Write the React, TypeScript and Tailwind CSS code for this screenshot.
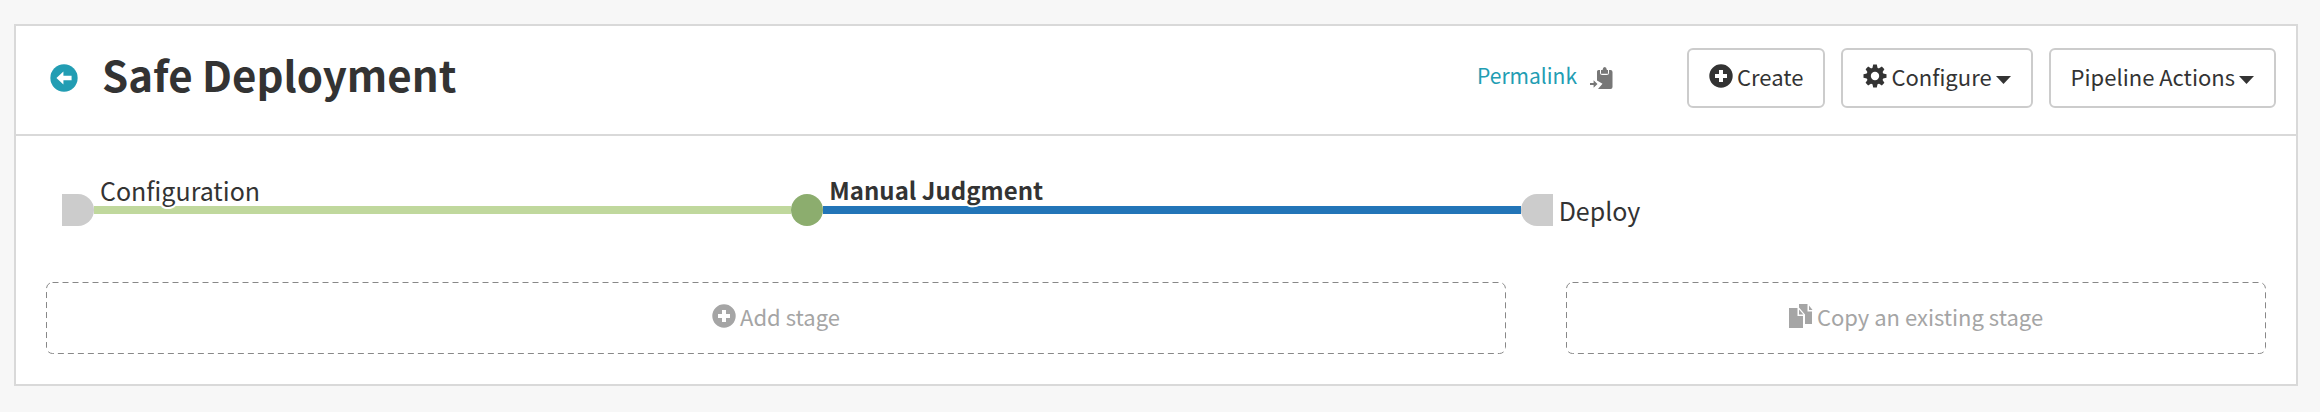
import type { ReactNode } from "react";

function Icon({ size, children }: { size: number; children: ReactNode }) {
  return (
    <svg
      width={size}
      height={size}
      viewBox="0 0 24 24"
      fill="currentColor"
      aria-hidden="true"
      className="shrink-0"
    >
      {children}
    </svg>
  );
}

function PlusIcon() {
  return (
    <Icon size={24}>
      <path fillRule="evenodd" d="M12 0.3a11.7 11.7 0 1 0 0 23.4a11.7 11.7 0 0 0 0-23.4zM10 6h4v4h4v4h-4v4h-4v-4H6v-4h4z" />
    </Icon>
  );
}

function GearIcon() {
  return (
    <Icon size={24}>
      {[0, 45, 90, 135].map((angle) => (
        <path key={angle} d="M10.2 0.5h3.6l1 4.5v14l-1 4.5h-3.6l-1-4.5V5z" transform={`rotate(${angle} 12 12)`} />
      ))}
      <circle cx="12" cy="12" r="8.6" />
      <circle cx="12" cy="12" r="4.2" fill="#fff" />
    </Icon>
  );
}

function ClipboardIcon() {
  return (
    <Icon size={24}>
      <path d="M9.5 4H11v2.5q0 2.5 2.5 2.5h4q2.5 0 2.5-2.5V4h1.5q2 0 2 2v15q0 2-2 2H9l4.5-5.3L8 14.5v-9Q8 4 9.5 4z" />
      <path d="M12 7.7V4h1.5q.4-3 2.2-3t2.2 3H19v3.7z" />
      <path d="M1 17h3.6v-2.7L8.5 18l-3.9 3.7V19H1z" />
    </Icon>
  );
}

function CopyIcon() {
  return (
    <Icon size={24}>
      <path d="M0 4h8.5v8H14v12H0z" />
      <path d="M10 5.5l4.5 5H10z" />
      <path d="M10 0h8.5v7.5H23V20h-7v-9.5l-6-7z" />
      <path d="M20 1.5L23.5 6H20z" />
    </Icon>
  );
}

function Caret() {
  return (
    <svg width="15" height="8" viewBox="0 0 15 8" fill="currentColor" aria-hidden="true" className="mt-2">
      <path d="M0 0h15L7.5 8z" />
    </svg>
  );
}

const buttonClass =
  "flex h-[60px] items-center gap-1 rounded-md border-2 border-[#ccc] bg-white px-5 pb-1 text-[22px] text-[#333] cursor-pointer";

const labelClass =
  "absolute left-1.5 bottom-2 whitespace-nowrap leading-8 [paint-order:stroke] [-webkit-text-stroke:4px_white]";

function StageButton({ children }: { children: ReactNode }) {
  return (
    <button
      type="button"
      className="relative flex h-[72px] w-full items-center justify-center gap-1 pb-1 text-[22px] text-[#a5a5a5] cursor-pointer"
    >
      <svg className="absolute inset-0 size-full" fill="none" aria-hidden="true">
        <rect
          x="0.5"
          y="0.5"
          rx="6"
          stroke="#888"
          strokeDasharray="6 4"
          className="h-[calc(100%-1px)] w-[calc(100%-1px)]"
        />
      </svg>
      {children}
    </button>
  );
}

export default function App() {
  return (
    <div className="min-h-screen bg-[#f7f7f7] pt-6 pr-[22px] pb-[26px] pl-[14px] font-['Noto_Sans_CJK_SC',sans-serif] text-[#333]">
      <div className="border-2 border-[#d9d9d9] bg-white">
        <header className="flex items-center border-b-2 border-[#d9d9d9] pt-[22px] pr-5 pb-[26px] pl-[34px]">
          <a href="#back" aria-label="Back to executions" className="text-[#229db3]">
            <Icon size={28}>
              <circle cx="12" cy="12" r="11.7" />
              <path fill="#fff" d="M5.5 12l6-5.5v3.5h7v4h-7v3.5z" />
            </Icon>
          </a>
          <h1 className="ml-6 pb-2 text-[42px] leading-[52px] font-bold">Safe Deployment</h1>
          <a href="#permalink" className="ml-auto pb-1 text-[21px] text-[#229db3]">
            Permalink
          </a>
          <button type="button" aria-label="Copy permalink" className="ml-3 text-[#777] cursor-pointer">
            <ClipboardIcon />
          </button>
          <div className="ml-[74px] flex gap-4">
            <button type="button" className={buttonClass}>
              <PlusIcon />
              Create
            </button>
            <button type="button" className={buttonClass}>
              <GearIcon />
              Configure
              <Caret />
            </button>
            <button type="button" className={buttonClass}>
              Pipeline Actions
              <Caret />
            </button>
          </div>
        </header>

        <main className="pt-[58px] pb-[30px]">
          <div className="grid grid-cols-3 px-[46px]">
            <div className="flex items-center">
              <span className="size-8 rounded-r-full bg-[#ccc]" />
              <div className="relative h-2 flex-1 bg-[#c0d89d]">
                <span className={`${labelClass} text-[25px]`}>Configuration</span>
              </div>
            </div>
            <div className="flex items-center">
              <span className="size-8 rounded-full bg-[#8cad6e]" />
              <div className="relative h-2 flex-1 bg-[#2275b8]">
                <span className={`${labelClass} text-[24px] font-bold`}>Manual Judgment</span>
              </div>
            </div>
            <div className="flex items-center">
              <span className="size-8 rounded-l-full bg-[#ccc]" />
              <span className="ml-1.5 text-[25px] leading-8">Deploy</span>
            </div>
          </div>

          <div className="mt-14 grid grid-cols-3">
            <div className="col-span-2 px-[30px]">
              <StageButton>
                <PlusIcon />
                Add stage
              </StageButton>
            </div>
            <div className="px-[30px]">
              <StageButton>
                <CopyIcon />
                Copy an existing stage
              </StageButton>
            </div>
          </div>
        </main>
      </div>
    </div>
  );
}
